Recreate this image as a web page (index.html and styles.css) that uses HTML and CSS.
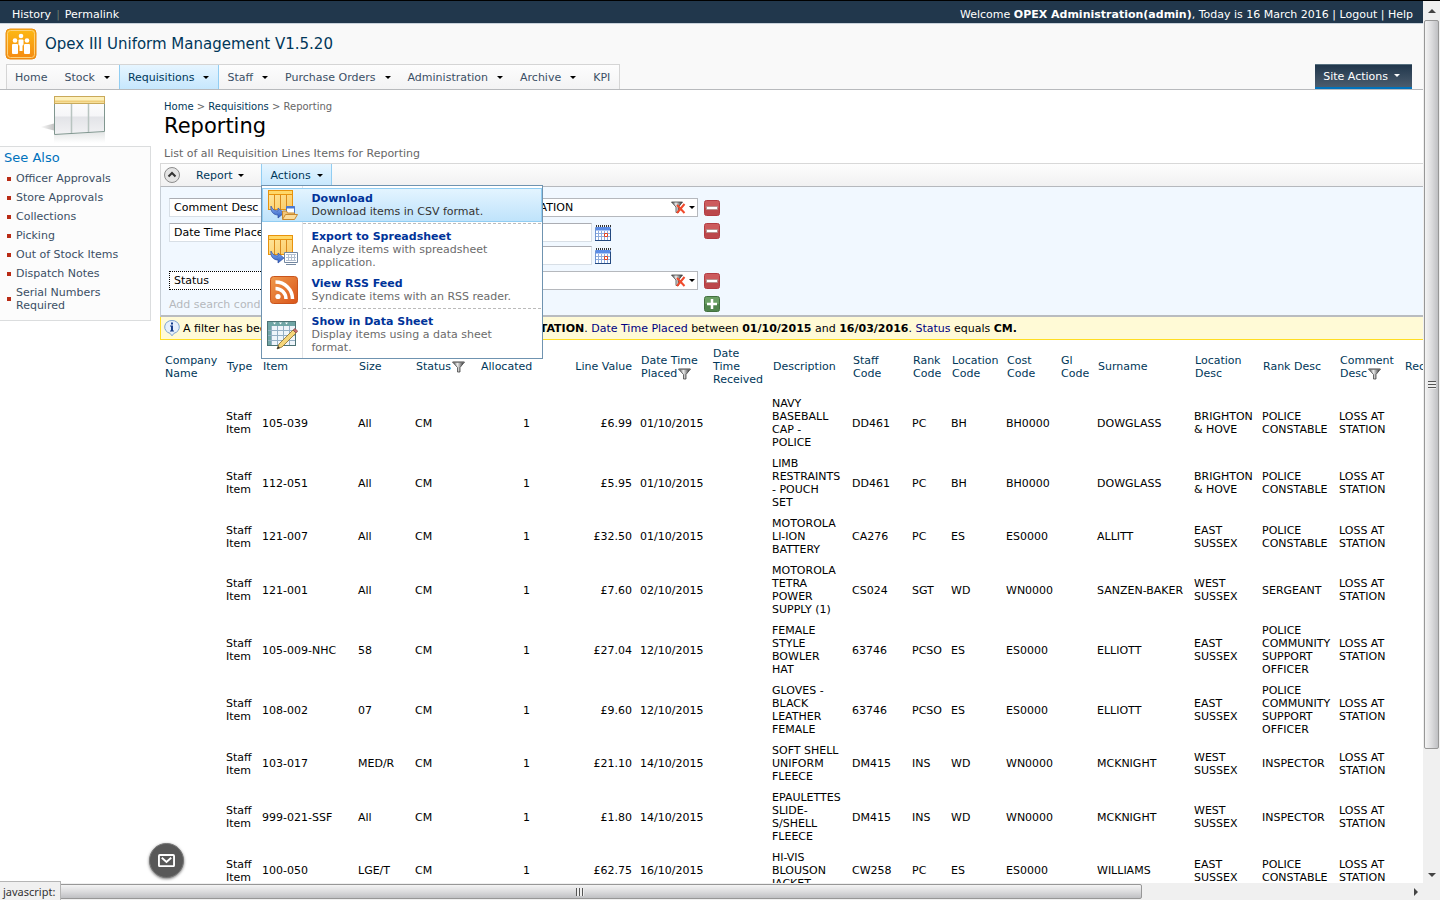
FILE: index.html
```html
<!DOCTYPE html>
<html lang="en">
<head>
  <meta charset="UTF-8">
  <meta name="viewport" content="width=device-width, initial-scale=1">
  <title>Reporting</title>
  <link rel="stylesheet" href="styles.css">
</head>
<body>
  <svg class="defs" aria-hidden="true">
    <defs>
      <linearGradient id="gOrange" x1="0" y1="0" x2="0" y2="1"><stop offset="0" stop-color="#fdb913"/><stop offset="1" stop-color="#f58a12"/></linearGradient>
      <linearGradient id="gYellow" x1="0" y1="0" x2="1" y2="1"><stop offset="0" stop-color="#ffe9a0"/><stop offset="1" stop-color="#fbc964"/></linearGradient>
      <linearGradient id="gRss" x1="0" y1="0" x2="1" y2="1"><stop offset="0" stop-color="#f09a4c"/><stop offset="1" stop-color="#d9541a"/></linearGradient>
      <linearGradient id="gFunnel" x1="0" y1="0" x2="1" y2="0"><stop offset="0" stop-color="#333"/><stop offset="0.4" stop-color="#eee"/><stop offset="1" stop-color="#222"/></linearGradient>
      <linearGradient id="gBlue" x1="0" y1="0" x2="0" y2="1"><stop offset="0" stop-color="#8fb4f5"/><stop offset="1" stop-color="#2c5cc0"/></linearGradient>
      <linearGradient id="gPane" x1="0" y1="0" x2="0" y2="1"><stop offset="0" stop-color="#fff"/><stop offset="0.5" stop-color="#f6f6f8"/><stop offset="0.55" stop-color="#e3e4e8"/><stop offset="1" stop-color="#f2f2f4"/></linearGradient>
      <linearGradient id="gFade" x1="0" y1="0" x2="1" y2="0"><stop offset="0" stop-color="#fff"/><stop offset="1" stop-color="#bbb"/></linearGradient>
      <linearGradient id="gMirror" x1="0" y1="0" x2="0" y2="1"><stop offset="0" stop-color="#e4e6e6"/><stop offset="1" stop-color="#fff"/></linearGradient>
    </defs>
    <symbol id="funnel" viewBox="0 0 13 12">
      <path d="M0.5 1h12L8 6.5V11H5.5V6.5z" fill="url(#gFunnel)" stroke="#444" stroke-width="0.8"/>
      <path d="M1 1.2h11" stroke="#777" stroke-width="1"/>
    </symbol>
    <symbol id="unfilter" viewBox="0 0 15 13">
      <path d="M0.5 1h11L7.5 6v5.5H5V6z" fill="url(#gFunnel)" stroke="#444" stroke-width="0.8"/>
      <path d="M6 4l7.5 8M13.5 3L6 12" stroke="#f04a2c" stroke-width="2" fill="none"/>
    </symbol>
    <symbol id="calendar" viewBox="0 0 16 16">
      <path d="M0.5 2.5h15v13H0.5z" fill="#fff" stroke="#6f94d2"/>
      <path d="M1 2h14v3.5H1z" fill="#5b8ce6"/>
      <path d="M1 1h15" stroke="#333" stroke-width="2" stroke-dasharray="1 1"/>
      <path d="M3.5 6v9M6.5 6v9M9.5 6v9M12.5 6v9M1 8.5h14M1 11.5h14" stroke="#8fadde" stroke-width="1"/>
      <path d="M9.5 8.5h3v3h-3z" fill="#fff" stroke="#e3431f"/>
      <path d="M0 15.5h16M15.5 4v12" stroke="#24497f"/>
    </symbol>
    <symbol id="minus" viewBox="0 0 16 16">
      <rect x="0.5" y="0.5" width="15" height="15" rx="2" fill="#cc5b5d" stroke="#b23c42"/>
      <path d="M1 8h14v7H1z" fill="#b03a40" opacity="0.6"/>
      <rect x="2.5" y="6.5" width="11" height="3" fill="#fff" stroke="#b08a88" stroke-width="0.8"/>
    </symbol>
    <symbol id="plus" viewBox="0 0 16 16">
      <rect x="0.5" y="0.5" width="15" height="15" rx="2" fill="#6a9f64" stroke="#42703f"/>
      <path d="M1 8h14v7H1z" fill="#40753e" opacity="0.6"/>
      <path d="M8 3v10M3 8h10" stroke="#fff" stroke-width="2.5"/>
    </symbol>
    <symbol id="columns" viewBox="0 0 32 32">
      <rect x="2.5" y="1.5" width="24" height="19" fill="url(#gYellow)" stroke="#e8930c"/>
      <rect x="2.5" y="1.5" width="24" height="4" fill="#ffd869" stroke="#e8930c"/>
      <path d="M8.5 6v14M14.5 6v14M20.5 6v14" stroke="#d98a1c"/>
      <path d="M5 17c1 3 4 5 7 5v-3l6 5-6 5v-3c-4 0-8-3-7-9z" fill="url(#gBlue)" stroke="#2f4fa0" stroke-width="0.7"/>
    </symbol>
  </svg>

  <div class="window">
    <div class="page">
      <header>
        <div class="topbar">
          <nav class="toplinks"><a href="#">History</a><span class="bar">|</span><a href="#">Permalink</a></nav>
          <div class="welcome">Welcome <b>OPEX Administration(admin)</b>, Today is 16 March 2016 | <a href="#">Logout</a> | <a href="#">Help</a></div>
        </div>
        <div class="banner">
          <svg class="logo" viewBox="0 0 32 32">
            <rect x="1" y="1" width="30" height="30" rx="4" fill="url(#gOrange)" stroke="#e98b12"/>
            <rect x="2.5" y="2.5" width="27" height="27" rx="3" fill="none" stroke="#fdd27a"/>
            <g fill="#fff">
              <circle cx="16" cy="8" r="2.3"/><circle cx="10" cy="12.5" r="2.3"/><circle cx="22" cy="12.5" r="2.3"/>
              <rect x="13.5" y="11.5" width="5" height="6" rx="1"/><rect x="14.5" y="17" width="3" height="6"/>
              <rect x="7" y="16" width="6" height="10" rx="1"/><rect x="19" y="16" width="6" height="10" rx="1"/>
            </g>
          </svg>
          <div class="sitename">Opex III Uniform Management V1.5.20</div>
        </div>
        <div class="navrow">
          <nav class="tabs">
            <a href="#">Home</a>
            <a href="#" class="drop">Stock</a>
            <a href="#" class="drop active">Requisitions</a>
            <a href="#" class="drop">Staff</a>
            <a href="#" class="drop">Purchase Orders</a>
            <a href="#" class="drop">Administration</a>
            <a href="#" class="drop">Archive</a>
            <a href="#">KPI</a>
          </nav>
          <button type="button" class="site-actions">Site Actions</button>
        </div>
      </header>

      <div class="content">
        <aside>
          <svg class="list-icon" viewBox="0 0 70 50">
            <path d="M4 34l16-4v8z" fill="url(#gFade)"/>
            <path d="M18 42l51-3v11H18z" fill="url(#gMirror)"/>
            <path d="M18.5 3.5h50v35l-50 3z" fill="url(#gPane)" stroke="#80968f"/>
            <path d="M35.5 10v30M52.5 10v29" stroke="#b8c4c0" stroke-width="1.5"/>
            <rect x="18.5" y="3.5" width="50" height="7" fill="#fdf0bb" stroke="#c9a95a"/>
            <path d="M19 8.5h49" stroke="#efcd7a" stroke-width="2"/>
          </svg>
          <section class="see-also">
            <h2>See Also</h2>
            <ul>
              <li><a href="#">Officer Approvals</a></li>
              <li><a href="#">Store Approvals</a></li>
              <li><a href="#">Collections</a></li>
              <li><a href="#">Picking</a></li>
              <li><a href="#">Out of Stock Items</a></li>
              <li><a href="#">Dispatch Notes</a></li>
              <li><a href="#">Serial Numbers Required</a></li>
            </ul>
          </section>
        </aside>

        <main>
          <div class="heading">
            <div class="crumbs"><a href="#">Home</a> &gt; <a href="#">Requisitions</a> &gt; <span>Reporting</span></div>
            <h1>Reporting</h1>
            <p>List of all Requisition Lines Items for Reporting</p>
          </div>

          <div class="toolbar">
            <button type="button" class="collapse" aria-label="Collapse">
              <svg viewBox="0 0 16 16"><circle cx="8" cy="8" r="7.5" fill="#e4e4e4" stroke="#8c8c8c"/><path d="M4.5 9.5L8 6l3.5 3.5" fill="none" stroke="#333" stroke-width="2"/></svg>
            </button>
            <button type="button" class="drop">Report</button>
            <div class="menu-wrap">
              <button type="button" class="drop open">Actions</button>
              <div class="menu">
                <a href="#" class="item hover">
                  <span class="ico"><svg viewBox="0 0 32 32"><use href="#columns"/><path d="M20.5 17.5h8v8h-8z" fill="#fff" stroke="#4a78d0"/><path d="M20 18.5h9" stroke="#4a78d0" stroke-width="2"/><path d="M16.5 30v-8h4l1 2h7v2" fill="#f3c77a" stroke="#c9892f"/><path d="M16.5 30.5l3-5h12l-3 5z" fill="#fbdc9c" stroke="#c9892f"/></svg></span>
                  <span class="txt"><b>Download</b>Download items in CSV format.</span>
                </a>
                <hr>
                <a href="#" class="item">
                  <span class="ico"><svg viewBox="0 0 32 32"><use href="#columns"/><path d="M18.5 18.5h13v10h-13z" fill="#fff" stroke="#7387a0"/><path d="M20 20.5h10M20 23.5h10M20 26.5h10M22.5 20v7M25.5 20v7M28.5 20v7" stroke="#b3bfd0"/><path d="M20 30.5h10" stroke="#7387a0"/></svg></span>
                  <span class="txt"><b>Export to Spreadsheet</b>Analyze items with spreadsheet application.</span>
                </a>
                <a href="#" class="item">
                  <span class="ico"><svg viewBox="0 0 32 32"><rect x="4.500" y="2.500" width="27" height="27" rx="3" fill="url(#gRss)" stroke="#c9541c"/><circle cx="12" cy="22.5" r="2.6" fill="#fff"/><path d="M9.5 14.5a10.5 10.5 0 0 1 10.5 10.5M9.5 8a17 17 0 0 1 17 17" fill="none" stroke="#fff" stroke-width="3.5"/></svg></span>
                  <span class="txt"><b>View RSS Feed</b>Syndicate items with an RSS reader.</span>
                </a>
                <hr>
                <a href="#" class="item">
                  <span class="ico"><svg viewBox="0 0 32 32"><rect x="1.5" y="2.5" width="28" height="24" fill="#eef4fa" stroke="#4c7274"/><path d="M2 3h27v4H2zM2 3h3v23H2z" fill="#6fa5a5"/><path d="M5.5 7v19M11.5 7v19M17.5 7v19M23.5 7v19M2 11.5h27M2 16.5h27M2 21.5h27" stroke="#94afc4"/><path d="M7 3.5h3l-1.500 2zM13 3.5h3l-1.5 2zM19 3.5h3l-1.5 2z" fill="#fff"/><path d="M11 30l2-5L27 11l3 3L16 28z" fill="#f5d67a" stroke="#8c6d2a" stroke-width="0.8"/><path d="M27 11l2-1.5 2.8 2.8L30 14z" fill="#c96a6a" stroke="#7d4545" stroke-width="0.6"/><path d="M11 30l1-3 2 2z" fill="#333"/></svg></span>
                  <span class="txt"><b>Show in Data Sheet</b>Display items using a data sheet format.</span>
                </a>
              </div>
            </div>
          </div>

          <form class="filters">
            <div class="filter">
              <select aria-label="Field"><option>Comment Desc</option></select>
              <select aria-label="Operator"><option>equals</option></select>
              <div class="combo">
                <input type="text" value="LOSS AT STATION" aria-label="Comment Desc value">
                <button type="button" aria-label="Clear filter"><svg viewBox="0 0 15 13"><use href="#unfilter"/></svg></button>
                <button type="button" class="arrow" aria-label="Show values"></button>
              </div>
              <button type="button" class="sq" aria-label="Remove condition"><svg viewBox="0 0 16 16"><use href="#minus"/></svg></button>
            </div>
            <div class="filter dates">
              <select aria-label="Field"><option>Date Time Placed</option></select>
              <select aria-label="Operator"><option>between</option></select>
              <div class="range">
                <div><input type="text" aria-label="From"><button type="button" class="sq" aria-label="Pick from date"><svg viewBox="0 0 16 16"><use href="#calendar"/></svg></button></div>
                <div><input type="text" aria-label="To"><button type="button" class="sq" aria-label="Pick to date"><svg viewBox="0 0 16 16"><use href="#calendar"/></svg></button></div>
              </div>
              <button type="button" class="sq" aria-label="Remove condition"><svg viewBox="0 0 16 16"><use href="#minus"/></svg></button>
            </div>
            <div class="filter">
              <select class="focused" aria-label="Field"><option>Status</option></select>
              <select aria-label="Operator"><option>equals</option></select>
              <div class="combo">
                <input type="text" aria-label="Status value">
                <button type="button" aria-label="Clear filter"><svg viewBox="0 0 15 13"><use href="#unfilter"/></svg></button>
                <button type="button" class="arrow" aria-label="Show values"></button>
              </div>
              <button type="button" class="sq" aria-label="Remove condition"><svg viewBox="0 0 16 16"><use href="#minus"/></svg></button>
            </div>
            <div class="filter add">
              <span>Add search condition</span>
              <button type="button" class="sq" aria-label="Add condition"><svg viewBox="0 0 16 16"><use href="#plus"/></svg></button>
            </div>
          </form>

          <div class="notice">
            <svg viewBox="0 0 16 16"><path d="M8 0.5a7 6.5 0 0 1 2 12.8L8 15.8l-2-2.5A7 6.5 0 0 1 8 0.5z" fill="#e6f0fc" stroke="#7ea3cf"/><path d="M7 2.5h2v2H7zM6 5.5h3v5h1v1H6v-1h1v-4H6z" fill="#163f8c"/></svg>
            <p>A filter has been applied to it. <span>Comment Desc</span> equals <b>LOSS AT STATION</b>. <span>Date Time Placed</span> between <b>01/10/2015</b> and <b>16/03/2016</b>. <span>Status</span> equals <b>CM.</b></p>
          </div>

          <table>
            <colgroup>
              <col class="w62"><col class="w36"><col class="w96"><col class="w57"><col class="w65"><col class="w58"><col class="w102"><col class="w72"><col class="w60"><col class="w80"><col class="w60"><col class="w39"><col class="w55"><col class="w54"><col class="w37"><col class="w97"><col class="w68"><col class="w77"><col class="w65"><col class="w96">
            </colgroup>
            <thead>
              <tr>
                <th>Company Name</th><th>Type</th><th>Item</th><th>Size</th>
                <th>Status<svg class="funnel" viewBox="0 0 13 12"><use href="#funnel"/></svg></th>
                <th>Allocated</th><th class="num">Line Value</th>
                <th>Date Time Placed<svg class="funnel" viewBox="0 0 13 12"><use href="#funnel"/></svg></th>
                <th>Date Time Received</th><th>Description</th><th>Staff Code</th><th>Rank Code</th><th>Location Code</th><th>Cost Code</th><th>Gl Code</th><th>Surname</th><th>Location Desc</th><th>Rank Desc</th>
                <th>Comment Desc<svg class="funnel" viewBox="0 0 13 12"><use href="#funnel"/></svg></th>
                <th>Received</th>
              </tr>
            </thead>
            <tbody>
              <tr><td></td><td>Staff Item</td><td>105-039</td><td>All</td><td>CM</td><td class="num">1</td><td class="num">£6.99</td><td>01/10/2015</td><td></td><td class="desc">NAVY BASEBALL CAP - POLICE</td><td>DD461</td><td>PC</td><td>BH</td><td>BH0000</td><td></td><td>DOWGLASS</td><td>BRIGHTON &amp; HOVE</td><td>POLICE CONSTABLE</td><td>LOSS AT STATION</td><td></td></tr>
              <tr><td></td><td>Staff Item</td><td>112-051</td><td>All</td><td>CM</td><td class="num">1</td><td class="num">£5.95</td><td>01/10/2015</td><td></td><td class="desc">LIMB RESTRAINTS - POUCH SET</td><td>DD461</td><td>PC</td><td>BH</td><td>BH0000</td><td></td><td>DOWGLASS</td><td>BRIGHTON &amp; HOVE</td><td>POLICE CONSTABLE</td><td>LOSS AT STATION</td><td></td></tr>
              <tr><td></td><td>Staff Item</td><td>121-007</td><td>All</td><td>CM</td><td class="num">1</td><td class="num">£32.50</td><td>01/10/2015</td><td></td><td class="desc">MOTOROLA LI-ION BATTERY</td><td>CA276</td><td>PC</td><td>ES</td><td>ES0000</td><td></td><td>ALLITT</td><td>EAST SUSSEX</td><td>POLICE CONSTABLE</td><td>LOSS AT STATION</td><td></td></tr>
              <tr><td></td><td>Staff Item</td><td>121-001</td><td>All</td><td>CM</td><td class="num">1</td><td class="num">£7.60</td><td>02/10/2015</td><td></td><td class="desc">MOTOROLA TETRA POWER SUPPLY (1)</td><td>CS024</td><td>SGT</td><td>WD</td><td>WN0000</td><td></td><td>SANZEN-BAKER</td><td>WEST SUSSEX</td><td>SERGEANT</td><td>LOSS AT STATION</td><td></td></tr>
              <tr><td></td><td>Staff Item</td><td>105-009-NHC</td><td>58</td><td>CM</td><td class="num">1</td><td class="num">£27.04</td><td>12/10/2015</td><td></td><td class="desc">FEMALE STYLE BOWLER HAT</td><td>63746</td><td>PCSO</td><td>ES</td><td>ES0000</td><td></td><td>ELLIOTT</td><td>EAST SUSSEX</td><td>POLICE COMMUNITY SUPPORT OFFICER</td><td>LOSS AT STATION</td><td></td></tr>
              <tr><td></td><td>Staff Item</td><td>108-002</td><td>07</td><td>CM</td><td class="num">1</td><td class="num">£9.60</td><td>12/10/2015</td><td></td><td class="desc">GLOVES - BLACK LEATHER FEMALE</td><td>63746</td><td>PCSO</td><td>ES</td><td>ES0000</td><td></td><td>ELLIOTT</td><td>EAST SUSSEX</td><td>POLICE COMMUNITY SUPPORT OFFICER</td><td>LOSS AT STATION</td><td></td></tr>
              <tr><td></td><td>Staff Item</td><td>103-017</td><td>MED/R</td><td>CM</td><td class="num">1</td><td class="num">£21.10</td><td>14/10/2015</td><td></td><td class="desc">SOFT SHELL UNIFORM FLEECE</td><td>DM415</td><td>INS</td><td>WD</td><td>WN0000</td><td></td><td>MCKNIGHT</td><td>WEST SUSSEX</td><td>INSPECTOR</td><td>LOSS AT STATION</td><td></td></tr>
              <tr><td></td><td>Staff Item</td><td>999-021-SSF</td><td>All</td><td>CM</td><td class="num">1</td><td class="num">£1.80</td><td>14/10/2015</td><td></td><td class="desc">EPAULETTES SLIDE-S/SHELL FLEECE</td><td>DM415</td><td>INS</td><td>WD</td><td>WN0000</td><td></td><td>MCKNIGHT</td><td>WEST SUSSEX</td><td>INSPECTOR</td><td>LOSS AT STATION</td><td></td></tr>
              <tr><td></td><td>Staff Item</td><td>100-050</td><td>LGE/T</td><td>CM</td><td class="num">1</td><td class="num">£62.75</td><td>16/10/2015</td><td></td><td class="desc">HI-VIS BLOUSON JACKET</td><td>CW258</td><td>PC</td><td>ES</td><td>ES0000</td><td></td><td>WILLIAMS</td><td>EAST SUSSEX</td><td>POLICE CONSTABLE</td><td>LOSS AT STATION</td><td></td></tr>
            </tbody>
          </table>
        </main>
      </div>

      <button type="button" class="mail" aria-label="Mail">
        <svg viewBox="0 0 18 14"><rect x="1" y="1" width="16" height="12" rx="1" fill="none" stroke="#fff" stroke-width="2"/><path d="M4 4l5 4.500L14 4" fill="none" stroke="#fff" stroke-width="2"/></svg>
      </button>
    </div>

    <div class="vscroll">
      <i class="tri up"></i>
      <div class="thumb"><i class="grip"></i></div>
      <i class="tri down"></i>
    </div>
    <div class="hscroll">
      <div class="thumb"><i class="grip"></i></div>
      <i class="tri right"></i>
    </div>
    <div class="status">javascript:</div>
  </div>
</body>
</html>
```
FILE: styles.css
```css
* {
  box-sizing: border-box;
}
body {
  margin: 0;
  font: 11px/13px Verdana, "DejaVu Sans", sans-serif;
  color: #000;
  background: #fff;
}
a {
  color: inherit;
  text-decoration: none;
}
button,
input,
select {
  font: inherit;
  color: inherit;
  margin: 0;
}
button {
  padding: 0;
  border: 0;
  background: none;
  cursor: pointer;
}
svg {
  display: block;
}
.defs {
  position: absolute;
  width: 0;
  height: 0;
}

/* window with its scrollbars */
.window {
  position: relative;
  display: grid;
  grid-template-columns: minmax(0, 1fr) 17px;
  grid-template-rows: minmax(0, 1fr) 17px;
  height: 100vh;
  background: #f0f0f0;
}
.page {
  position: relative;
  overflow: hidden;
  background: #fff;
}

/* header */
.topbar {
  display: flex;
  justify-content: space-between;
  padding: 7px 10px 2px 12px;
  border-top: 1px solid #000;
  border-bottom: 1px solid #c9d2db;
  background: #21374c;
  color: #fff;
}
.bar {
  margin: 0 5px;
  color: #6d7c6d;
}
.banner {
  display: flex;
  align-items: center;
  gap: 8px;
  height: 40px;
  padding: 0 5px;
  background: #f9f9f9;
}
.logo {
  width: 32px;
  height: 32px;
}
.sitename {
  font-size: 15px;
  line-height: 18px;
  color: #003759;
}
.navrow {
  display: flex;
  justify-content: space-between;
  padding: 0 11px 0 6px;
  border-bottom: 1px solid #b8babd;
  background: #f9f9f9;
}
.tabs {
  display: flex;
  border: 1px solid #d5d5d5;
  border-bottom: 0;
  background: linear-gradient(#fdfdfd, #f3f3f4);
}
.tabs a {
  padding: 6px 9px 5px 8px;
  color: #3b4f65;
}
.drop::after {
  content: "";
  display: inline-block;
  margin-left: 6px;
  vertical-align: 2px;
  border: 3px solid transparent;
  border-top-color: #000;
  border-bottom: 0;
}
.tabs .drop::after {
  margin-left: 9px;
}
.tabs .active {
  border: solid #91cdf2;
  border-width: 0 1px;
  background: linear-gradient(#e6f5ff, #c6e7fd);
  color: #003759;
}
.site-actions {
  padding: 0 12px 0 8px;
  border-top: 1px solid #57707f;
  border-bottom: 2px solid #0072bc;
  background: linear-gradient(#21374c, #4b5c6d);
  color: #fff;
}
.site-actions::after {
  content: "";
  display: inline-block;
  margin-left: 6px;
  vertical-align: 3px;
  border: 3px solid transparent;
  border-top-color: #fff;
  border-bottom: 0;
}

/* left column */
.content {
  display: flex;
}
aside {
  flex: 0 0 151px;
  margin-right: 9px;
}
.list-icon {
  width: 70px;
  height: 50px;
  margin: 3px 0 3px 36px;
}
.see-also {
  padding: 3px 4px 5px;
  border: 1px solid #dbddde;
  border-left: 0;
  background: #fcfcfc;
}
.see-also h2 {
  margin: 0 0 3px;
  font-size: 13px;
  font-weight: normal;
  line-height: 16px;
  color: #0072bc;
}
.see-also ul {
  margin: 0;
  padding: 0;
  list-style: none;
}
.see-also li {
  display: flex;
  align-items: center;
  gap: 5px;
  padding: 3px 0;
  color: #3b4f65;
}
.see-also li::before {
  content: "";
  flex: none;
  width: 4px;
  height: 4px;
  margin-left: 3px;
  background: #b92b15;
}

/* page heading */
main {
  flex: 1;
  min-width: 0;
}
.heading {
  padding: 10px 0 3px 4px;
  color: #676767;
}
.crumbs {
  font-size: 10px;
}
.crumbs a {
  color: #003759;
}
h1 {
  margin: 0 0 8px;
  font-size: 21px;
  font-weight: normal;
  line-height: 26px;
  color: #000;
}
.heading p {
  margin: 0;
}

/* toolbar and menu */
.toolbar {
  display: flex;
  border: solid #d8d8d8;
  border-width: 1px 0 1px 1px;
  border-bottom-color: #b5b8bd;
  background: linear-gradient(#fdfdfd, #f1f1f2);
  color: #003759;
}
.collapse {
  width: 22px;
  padding: 3px;
}
.toolbar .drop {
  height: 22px;
  padding: 0 8px;
  border: solid transparent;
  border-width: 0 1px;
}
.toolbar > .drop {
  margin: 0 8px 0 4px;
}
.menu-wrap {
  position: relative;
}
.toolbar .open {
  border-color: #91cdf2;
  background: linear-gradient(#e6f5ff, #c6e7fd);
}
.menu {
  position: absolute;
  z-index: 2;
  top: 21px;
  left: 0;
  width: 282px;
  padding-top: 2px;
  border: 1px solid #6f93b0;
  background: linear-gradient(to right, #fff 40px, #e2e4e7 40px, #e2e4e7 41px, #fff 41px);
}
.item {
  display: flex;
  align-items: center;
  padding: 3px 0;
  border: 1px solid transparent;
  color: #6b6b6b;
}
.item.hover {
  border-color: #91cdf2;
  background: linear-gradient(#e3f4ff, #bfe3fb);
  color: #333;
}
.ico {
  flex: 0 0 48px;
  margin: -3px 0;
  padding-left: 3px;
}
.ico svg {
  width: 32px;
  height: 32px;
}
.txt {
  padding-right: 20px;
}
.txt b {
  display: block;
  color: #003399;
}
.menu hr {
  margin: 1px 1px 2px 41px;
  border: 0;
  border-top: 1px dashed #bbb;
}

/* search conditions */
.filters {
  padding: 11px 8px 3px;
  border-left: 1px solid #c5cdd5;
  border-bottom: 2px solid #b9bcc0;
  background: #f1f8ff;
}
.filter {
  display: grid;
  grid-template-columns: 180px 118px 225px 16px;
  column-gap: 3px;
  align-items: center;
  margin-bottom: 6px;
}
.filter > .sq {
  margin-left: 3px;
}
.filter input,
.filter select {
  appearance: none;
  min-width: 0;
  height: 19px;
  padding: 0 4px;
  border: 1px solid #d8dfe6;
  border-top-color: #abadb3;
  border-radius: 0;
  background: #fff;
}
.filter .focused {
  border: 1px dotted #000;
}
.combo {
  display: flex;
  align-items: center;
  height: 19px;
  border: 1px solid #b5b8bd;
  background: #fff;
}
.combo input {
  flex: 1;
  height: 17px;
  border: 0;
}
.combo svg {
  width: 15px;
  height: 13px;
}
.arrow {
  width: 11px;
}
.arrow::before {
  content: "";
  display: block;
  width: 0;
  margin-left: 3px;
  border: 3px solid transparent;
  border-top-color: #000;
  border-bottom: 0;
}
.sq,
.sq svg {
  width: 16px;
  height: 16px;
}
.dates {
  align-items: start;
}
.range {
  display: grid;
  gap: 4px;
}
.range div {
  display: flex;
  align-items: center;
  gap: 3px;
}
.range input {
  width: 119px;
}
.add {
  grid-template-columns: 529px 16px;
  margin: 0;
  color: #b5b8bd;
}

.notice {
  display: flex;
  align-items: center;
  gap: 3px;
  padding: 3px;
  border: solid #ffdd22;
  border-width: 0 0 1px 1px;
  background: #fffad6;
}
.notice svg {
  width: 16px;
  height: 16px;
}
.notice p {
  margin: 0;
  white-space: nowrap;
}
.notice span {
  color: #000080;
}

/* requisition lines */
table {
  width: 1336px;
  table-layout: fixed;
  border-collapse: collapse;
}
th,
td {
  padding: 4px 0 4px 4px;
  text-align: left;
  vertical-align: middle;
}
th {
  padding: 7px 0 7px 5px;
  font-weight: normal;
  color: #003759;
}
td.num,
th.num {
  padding-right: 4px;
  text-align: right;
}
td.desc {
  padding-right: 8px;
}
.funnel {
  display: inline-block;
  width: 13px;
  height: 12px;
  margin-left: 1px;
  vertical-align: -3px;
}
.w36 { width: 36px; }
.w37 { width: 37px; }
.w39 { width: 39px; }
.w54 { width: 54px; }
.w55 { width: 55px; }
.w57 { width: 57px; }
.w58 { width: 58px; }
.w60 { width: 60px; }
.w62 { width: 62px; }
.w65 { width: 65px; }
.w68 { width: 68px; }
.w72 { width: 72px; }
.w77 { width: 77px; }
.w80 { width: 80px; }
.w96 { width: 96px; }
.w97 { width: 97px; }
.w102 { width: 102px; }

/* floating mail button */
.mail {
  position: absolute;
  left: 149px;
  bottom: 5px;
  width: 35px;
  height: 35px;
  padding: 0 8px;
  border: 1px solid #777;
  border-radius: 50%;
  background: #585858;
  box-shadow: 0 1px 3px #777;
}

/* scrollbars */
.vscroll,
.hscroll {
  display: flex;
  align-items: center;
}
.vscroll {
  flex-direction: column;
  padding: 8px 0 6px;
  border-top: 1px solid #000;
}
.vscroll .thumb {
  width: 15px;
  height: 84%;
  margin: 7px 0 auto;
  background: linear-gradient(to right, #f4f4f4, #dcdcde 50%, #bfc0c3);
}
.hscroll .thumb {
  width: 79%;
  height: 15px;
  margin: 0 auto 0 18px;
  background: linear-gradient(#f4f4f4, #dcdcde 50%, #bfc0c3);
}
.thumb {
  display: flex;
  align-items: center;
  justify-content: center;
  border: 1px solid #979797;
  border-radius: 2px;
}
.grip {
  width: 8px;
  height: 8px;
  background: repeating-linear-gradient(#555 0 1px, #eee 1px 3px);
}
.hscroll .grip {
  background: repeating-linear-gradient(to right, #555 0 1px, #eee 1px 3px);
}
.tri {
  border: 4px solid transparent;
}
.up {
  border-top: 0;
  border-bottom-color: #444;
}
.down {
  border-bottom: 0;
  border-top-color: #444;
}
.right {
  margin-right: 5px;
  border-right: 0;
  border-left-color: #444;
}
.status {
  position: absolute;
  left: 0;
  bottom: 0;
  padding: 3px 5px 2px 3px;
  border: solid #b5b5b5;
  border-width: 1px 1px 0 0;
  background: #f0f0f0;
  color: #333;
  font-family: "Noto Sans", sans-serif;
}
```
